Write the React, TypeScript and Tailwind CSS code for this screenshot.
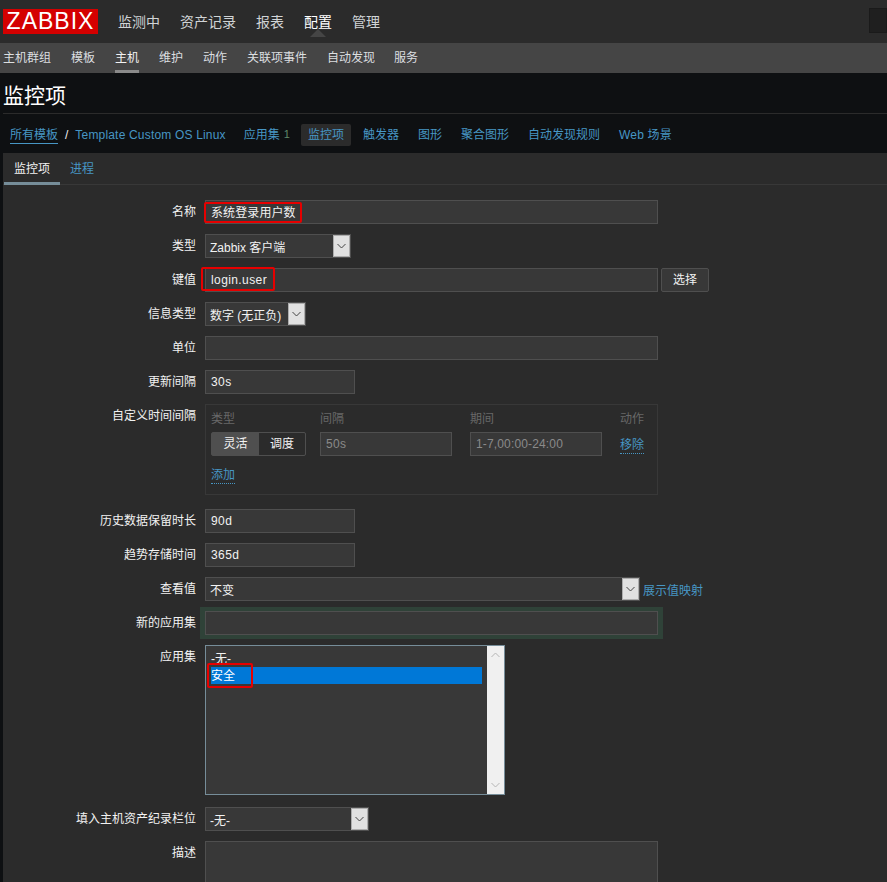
import React from 'react';

const topNav = ['监测中', '资产记录', '报表', '配置', '管理'];
const subNav = ['主机群组', '模板', '主机', '维护', '动作', '关联项事件', '自动发现', '服务'];

const inputCls = 'h-6 bg-[#383838] border border-[#4f4f4f] px-[5px] flex items-center text-[#f2f2f2] text-xs';

const Row = ({ label, children }: { label: string; children: React.ReactNode }) => (
  <div className="flex mb-[10px]">
    <div className="w-[193px] pt-[4px] pr-0 text-right text-xs leading-[16px] text-[#f2f2f2]">{label}</div>
    <div className="ml-[9px] flex-1 min-w-0">{children}</div>
  </div>
);

const Chevron = ({ up }: { up?: boolean }) => (
  <svg width="9" height="6" viewBox="0 0 9 6" fill="none" stroke="currentColor" strokeWidth="1">
    <path d={up ? 'M0.5 5L4.5 1L8.5 5' : 'M0.5 1L4.5 5L8.5 1'} />
  </svg>
);

const Select = ({ value, width }: { value: string; width: string }) => (
  <div className={`${inputCls} ${width} !pl-[4px] !pr-0 justify-between`}>
    <span className="pt-[4px]">{value}</span>
    <span className="w-[17px] h-[22px] bg-[#e1e1e1] border border-[#adadad] flex items-center justify-center text-[#444]">
      <Chevron />
    </span>
  </div>
);

const RedMark = ({ className }: { className: string }) => (
  <div className={`absolute border-2 border-[#e60000] rounded-[2px] ${className}`} />
);

export default function App() {
  return (
    <div className="h-screen overflow-hidden bg-[#0e1012] font-['Liberation_Sans','Noto_Sans_CJK_SC',sans-serif] text-xs">
      {/* top nav */}
      <header className="h-[43px] bg-[#2b2b2b] flex items-center pl-[3px] relative">
        <div className="w-[95px] h-[25px] bg-[#d40000] text-white text-[23px] leading-[25px] text-center tracking-[1px]">ZABBIX</div>
        <nav className="flex gap-5 ml-5">
          {topNav.map((item) => (
            <div key={item} className={`relative text-sm ${item === '配置' ? 'text-white' : 'text-[#d0d4d6]'}`}>
              {item}
              {item === '配置' && (
                <span className="absolute left-1/2 -translate-x-1/2 top-[17px] w-0 h-0 border-x-[8px] border-x-transparent border-b-[8px] border-b-[#454545]" />
              )}
            </div>
          ))}
        </nav>
        <div className="absolute right-0 top-[8px] w-[18px] h-[25px] bg-[#1f1f1f] border border-[#1a1a1a]" />
      </header>
      <div className="h-[30px] bg-[#454545] flex gap-5 pl-[3px]">
        {subNav.map((item) => (
          <div key={item} className={`h-[30px] pt-[7px] leading-[16px] text-[#dcdfe0] ${item === '主机' ? 'border-b-[3px] border-[#8a8a8a] text-[#f2f2f2]' : ''} ${item === '服务' ? '-ml-px' : ''}`}>
            {item}
          </div>
        ))}
      </div>

      {/* title + breadcrumbs */}
      <div className="pl-[3px]">
        <div className="h-[41px] border-b border-[#2b2b2b] text-white text-[21px] leading-[46px]">监控项</div>
        <div className="h-[39px] flex items-center pt-[2px] pl-[7px] text-[#4796c4]">
          <span className="border-b border-[#4796c4] pt-[1px] leading-[16px]">所有模板</span>
          <span className="mx-[7px] text-[#f2f2f2]">/</span>
          <span className="tracking-[0.18px]">Template Custom OS Linux</span>
          <span className="ml-[18px]">应用集</span>
          <span className="ml-[4px] text-[#5f8a6a] text-[11px]">1</span>
          <span className="ml-[11px] w-[50px] h-[22px] bg-[#2b2b2b] rounded-[2px] flex items-center justify-center">监控项</span>
          <span className="ml-3">触发器</span>
          <span className="ml-[19px]">图形</span>
          <span className="ml-[19px]">聚合图形</span>
          <span className="ml-[19px]">自动发现规则</span>
          <span className="ml-[19px] tracking-[0.2px]">Web 场景</span>
        </div>
      </div>

      {/* form panel */}
      <main className="ml-[3px] bg-[#2b2b2b] h-full">
        <div className="h-[32px] flex border-b-[1px] border-[#383838]">
          <div className="ml-[1px] h-[32px] w-[56px] pt-[8px] text-center leading-[16px] text-[#f2f2f2] border-b-[3px] border-[#768d99]">监控项</div>
          <div className="px-[10px] pt-[8px] leading-[16px] text-[#4796c4]">进程</div>
        </div>

        <div className="pt-[15px]">
          <Row label="名称">
            <div className="relative w-[453px]">
              <div className={`${inputCls} tracking-[0.1px]`}><span className="pt-[2px]">系统登录用户数</span></div>
              <RedMark className="left-[-1px] top-[2px] w-[98px] h-[21px]" />
            </div>
          </Row>
          <Row label="类型"><Select value="Zabbix 客户端" width="w-[146px]" /></Row>
          <Row label="键值">
            <div className="flex">
              <div className="relative w-[453px]">
                <div className={`${inputCls} tracking-[0.4px]`}>login.user</div>
                <RedMark className="left-[-4px] top-[-1px] w-[74px] h-6" />
              </div>
              <div className="ml-[3px] w-[48px] h-6 border border-[#4f4f4f] bg-[#383838] rounded-[2px] flex items-center justify-center text-[#f2f2f2]">选择</div>
            </div>
          </Row>
          <Row label="信息类型"><Select value="数字 (无正负)" width="w-[101px]" /></Row>
          <Row label="单位"><div className={`${inputCls} w-[453px]`} /></Row>
          <Row label="更新间隔"><div className={`${inputCls} w-[150px] tracking-[0.4px]`}>30s</div></Row>
          <Row label="自定义时间间隔">
            <div className="w-[453px] h-[91px] border border-[#383838] px-[5px] pt-[6px]">
              <div className="flex leading-[16px] text-[#686868]">
                <div className="w-[109px]">类型</div>
                <div className="w-[150px]">间隔</div>
                <div className="w-[150px]">期间</div>
                <div>动作</div>
              </div>
              <div className="flex mt-[5px] items-start">
                <div className="flex w-[95px] h-6 border border-[#4f4f4f] rounded-[2px] text-[#f2f2f2]">
                  <div className="w-[47px] bg-[#4f4f4f] flex items-center justify-center">灵活</div>
                  <div className="flex-1 flex items-center justify-center">调度</div>
                </div>
                <div className={`${inputCls} w-[132px] ml-[14px] !text-[#8a8a8a] tracking-[0.3px]`}>50s</div>
                <div className={`${inputCls} w-[132px] ml-[18px] !text-[#8a8a8a] tracking-[0.15px]`}>1-7,00:00-24:00</div>
                <span className="ml-[18px] mt-[5px] text-[#4796c4] border-b border-dotted border-[#4796c4] leading-[16px]">移除</span>
              </div>
              <span className="inline-block mt-[12px] text-[#4796c4] border-b border-dotted border-[#4796c4] leading-[15px]">添加</span>
            </div>
          </Row>
          <div className="h-1" />
          <Row label="历史数据保留时长"><div className={`${inputCls} w-[150px] tracking-[0.4px]`}>90d</div></Row>
          <Row label="趋势存储时间"><div className={`${inputCls} w-[150px] tracking-[0.4px]`}>365d</div></Row>
          <Row label="查看值">
            <div className="flex items-center">
              <Select value="不变" width="w-[435px]" />
              <span className="ml-[3px] pt-[4px] text-[#4796c4]">展示值映射</span>
            </div>
          </Row>
          <Row label="新的应用集">
            <div className={`${inputCls} w-[453px] shadow-[1px_0_0_4px_#2f4238,-1px_0_0_4px_#2f4238]`} />
          </Row>
          <Row label="应用集">
            <div className="relative w-[300px] h-[150px] bg-[#383838] border border-[#768d99] flex text-[#f2f2f2]">
              <div className="flex-1 pl-[5px] pr-[5px] pt-[4px]">
                <div className="h-[17px] leading-[19px]">-无-</div>
                <div className="h-[17px] leading-[19px] bg-[#0078d7] text-white">安全</div>
              </div>
              <div className="w-[17px] bg-[#f0f0f0] flex flex-col justify-between items-center py-[6px] text-[#b5b5b5]">
                <Chevron up />
                <Chevron />
              </div>
              <RedMark className="left-[1px] top-[17px] w-[46px] h-[25px]" />
            </div>
          </Row>
          <div className="h-[2px]" />
          <Row label="填入主机资产纪录栏位"><Select value="-无-" width="w-[164px]" /></Row>
          <Row label="描述"><div className={`${inputCls} w-[453px] !h-[60px]`} /></Row>
        </div>
      </main>
    </div>
  );
}
